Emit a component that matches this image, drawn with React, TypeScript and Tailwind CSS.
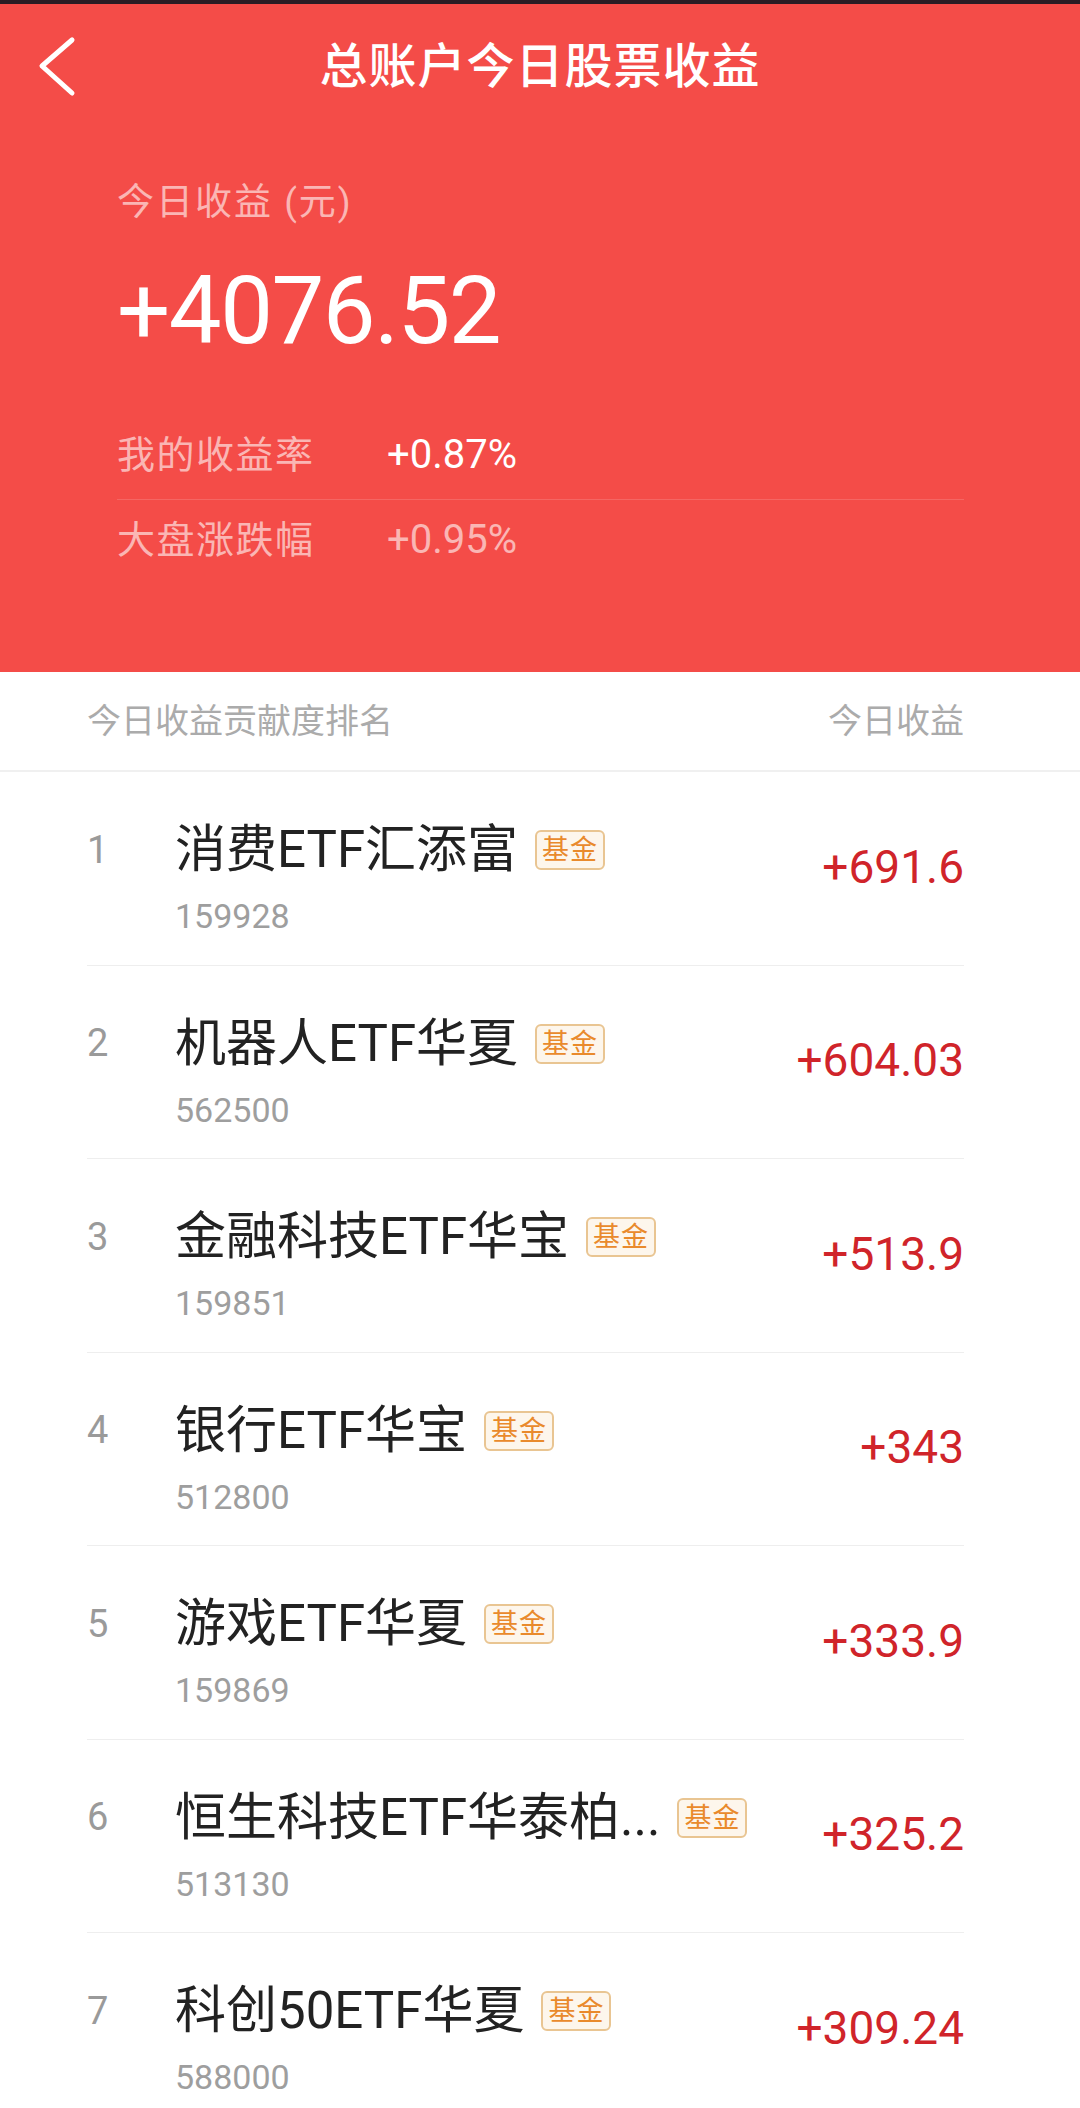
import React from "react";

const rows = [
  { rank: 1, name: "消费ETF汇添富", code: "159928", value: "+691.6" },
  { rank: 2, name: "机器人ETF华夏", code: "562500", value: "+604.03" },
  { rank: 3, name: "金融科技ETF华宝", code: "159851", value: "+513.9" },
  { rank: 4, name: "银行ETF华宝", code: "512800", value: "+343" },
  { rank: 5, name: "游戏ETF华夏", code: "159869", value: "+333.9" },
  { rank: 6, name: "恒生科技ETF华泰柏...", code: "513130", value: "+325.2" },
  { rank: 7, name: "科创50ETF华夏", code: "588000", value: "+309.24" },
];

export default function App() {
  return (
    <div className="w-[1080px] h-[2108px] overflow-hidden bg-white font-['Roboto','Noto_Sans_CJK_SC',sans-serif]">
      <div className="h-[4px] bg-[#2a1c24]" />
      <div className="bg-[#f44c48] h-[668px] flex flex-col">
        <div className="h-[126px] grid grid-cols-[1fr_auto_1fr] items-center">
          <div className="pl-[38px] flex items-center">
            <svg width="40" height="64" viewBox="0 0 40 64" fill="none">
              <path d="M34 5 L4 31 L34 58" stroke="white" strokeWidth="5" strokeLinecap="round" strokeLinejoin="round" />
            </svg>
          </div>
          <div className="text-white text-[48px] font-medium tracking-[1px] leading-[60px]">总账户今日股票收益</div>
          <div />
        </div>
        <div className="pl-[117px] pr-[116px] flex flex-col">
          <div className="mt-[49px] h-[48px] leading-[48px] text-[37px] tracking-[2px] text-white/60">今日收益 (元)</div>
          <div className="mt-[29px] h-[110px] leading-[110px] text-[94px] tracking-[-1.5px] text-white">+4076.52</div>
          <div className="mt-[61px] h-[56px] flex items-center">
            <div className="w-[270px] text-[38px] tracking-[1.5px] text-white/60">我的收益率</div>
            <div className="text-[40px] text-white">+0.87%</div>
          </div>
          <div className="mt-[16px] h-[1px] bg-white/15" />
          <div className="mt-[12px] h-[56px] flex items-center">
            <div className="w-[270px] text-[38px] tracking-[1.5px] text-white/60">大盘涨跌幅</div>
            <div className="text-[40px] text-white/60">+0.95%</div>
          </div>
        </div>
      </div>
      <div className="h-[100px] border-b-2 border-[#f0f0f0] pl-[87px] pr-[116px] flex items-center justify-between text-[34px] text-[#ababab]">
        <span>今日收益贡献度排名</span>
        <span>今日收益</span>
      </div>
      <div className="ml-[87px] mr-[116px]">
        {rows.map((r) => (
          <div key={r.rank} className="h-[193.5px] border-b border-[#eeeeee] flex">
            <div className="flex-1 flex flex-col pt-[48px]">
              <div className="h-[60px] flex items-center">
                <div className="w-[88px] text-[38px] text-[#9a9a9a]">{r.rank}</div>
                <div className="text-[51px] text-[#222222] leading-[60px] whitespace-nowrap">{r.name}</div>
                <div className="ml-[17px] h-[40px] px-[5px] border-2 border-[#e9c592] bg-[#fdf6ec] rounded-[6px] text-[27px] leading-[36px] text-[#e98a2c] tracking-[1px]">基金</div>
              </div>
              <div className="mt-[14px] ml-[88px] h-[44px] leading-[44px] text-[34px] text-[#9e9e9e]">{r.code}</div>
            </div>
            <div className="flex items-center text-[46px] text-[#d0242a] pb-[2px]">{r.value}</div>
          </div>
        ))}
      </div>
    </div>
  );
}
